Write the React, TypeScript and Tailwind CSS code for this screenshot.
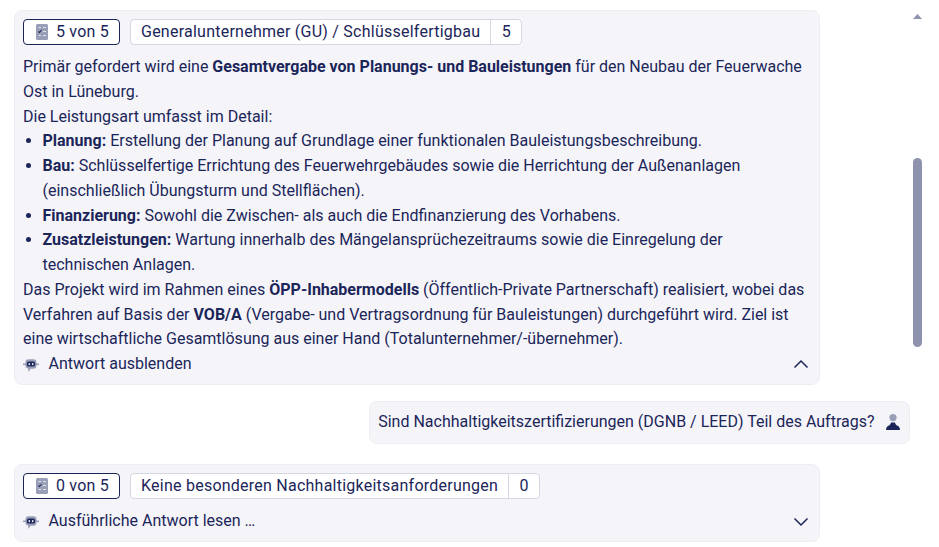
import React from "react";

const navy = "#1b2559";

function ChecklistIcon() {
  return (
    <svg width="12" height="16" viewBox="0 0 12 16" className="shrink-0">
      <rect x="0" y="0" width="12" height="16" rx="1.5" fill="#9a9fb8" />
      <path d="M2.5 7.5l1 1 2-2.5" stroke="#1b2559" strokeWidth="1.1" fill="none" />
      <path d="M7 3.5h3M7 7.5h3M7 11.5h3M2.5 11.5h2.5M2.5 3.5h2.5" stroke="#dfe1ea" strokeWidth="1" fill="none" />
    </svg>
  );
}

function BotIcon() {
  return (
    <svg width="16" height="14" viewBox="0 0 16 14" className="mt-[3px] shrink-0">
      <rect x="0" y="4.5" width="3" height="1.6" fill="#9a9fb8" />
      <rect x="13" y="4.5" width="3" height="1.6" fill="#9a9fb8" />
      <path d="M5.5 0.3h5a3 3 0 0 1 3 3v3.4a3 3 0 0 1-3 3H7.8L5.2 13V9.6a3 3 0 0 1-2.7-2.9V3.3a3 3 0 0 1 3-3z" fill="#9a9fb8" />
      <rect x="3.8" y="2.6" width="8.4" height="5" rx="2.2" fill="#1b2559" />
      <rect x="5.5" y="4" width="1.6" height="2.2" rx="0.7" fill="#e4e6f0" />
      <rect x="8.9" y="4" width="1.6" height="2.2" rx="0.7" fill="#e4e6f0" />
    </svg>
  );
}

function UserIcon() {
  return (
    <svg width="14" height="16" viewBox="0 0 14 16" className="shrink-0">
      <circle cx="7" cy="3.6" r="3.6" fill="#9a9fb8" />
      <path d="M0 16c0-2.6 1.4-4 3-4.6C4.2 11 4.6 10 5 8.6h4c.4 1.4.8 2.4 2 2.8 1.6.6 3 2 3 4.6z" fill="#1b2559" />
    </svg>
  );
}

function Chevron({ up }: { up?: boolean }) {
  return (
    <svg width="16" height="10" viewBox="0 0 16 10" className="shrink-0">
      <path d={up ? "M1.5 8.5L8 2l6.5 6.5" : "M1.5 1.5L8 8l6.5-6.5"} stroke="#1b2559" strokeWidth="1.5" fill="none" />
    </svg>
  );
}

function Tags({ score, label, count }: { score: string; label: string; count: string }) {
  return (
    <div className="flex h-[26px] items-stretch gap-[10px] tracking-[0.24px]">
      <div className="flex w-[97px] items-center justify-center gap-[8px] rounded-[4px] border border-[#1b2559] bg-white pl-[2px]">
        <ChecklistIcon />
        <span>{score}</span>
      </div>
      <div className="flex items-stretch rounded-[4px] border border-[#d5d7e2] bg-white">
        <span className="flex items-center px-[10px]">{label}</span>
        <span className="flex w-[31px] items-center justify-center border-l border-[#d5d7e2]">{count}</span>
      </div>
    </div>
  );
}

export default function App() {
  return (
    <div
      className="flex h-[547px] w-[939px] overflow-hidden bg-white text-[16px] leading-[24.75px]"
      style={{ fontFamily: "Roboto, sans-serif", color: navy }}
    >
      <main className="flex w-[910px] shrink-0 flex-col pl-[14px] pt-[10px]">
        <section className="w-[806px] rounded-[8px] border border-[#eceef3] bg-[#f5f5f9] pb-[7px] pl-[8px] pr-[10px] pt-[8px]">
          <Tags score="5 von 5" label="Generalunternehmer (GU) / Schlüsselfertigbau" count="5" />
          <div className="mt-[10px]">
            <p>
              Primär gefordert wird eine <b className="font-bold">Gesamtvergabe von Planungs- und Bauleistungen</b> für den Neubau der Feuerwache Ost in Lüneburg.
            </p>
            <p>Die Leistungsart umfasst im Detail:</p>
            <ul className="list-disc pl-[19.5px]">
              <li><b className="font-bold">Planung:</b> Erstellung der Planung auf Grundlage einer funktionalen Bauleistungsbeschreibung.</li>
              <li><b className="font-bold">Bau:</b> Schlüsselfertige Errichtung des Feuerwehrgebäudes sowie die Herrichtung der Außenanlagen (einschließlich Übungsturm und Stellflächen).</li>
              <li><b className="font-bold">Finanzierung:</b> Sowohl die Zwischen- als auch die Endfinanzierung des Vorhabens.</li>
              <li><b className="font-bold">Zusatzleistungen:</b> Wartung innerhalb des Mängelansprüchezeitraums sowie die Einregelung der technischen Anlagen.</li>
            </ul>
            <p>
              Das Projekt wird im Rahmen eines <b className="font-bold">ÖPP-Inhabermodells</b> (Öffentlich-Private Partnerschaft) realisiert, wobei das Verfahren auf Basis der <b className="font-bold">VOB/A</b> (Vergabe- und Vertragsordnung für Bauleistungen) durchgeführt wird. Ziel ist eine wirtschaftliche Gesamtlösung aus einer Hand (Totalunternehmer/-übernehmer).
            </p>
          </div>
          <div className="flex items-center justify-between">
            <div className="flex items-center gap-[9.5px]">
              <BotIcon />
              <span>Antwort ausblenden</span>
            </div>
            <Chevron up />
          </div>
        </section>

        <div className="mt-[16px] flex justify-end">
          <div className="flex h-[43px] items-center gap-[11.5px] rounded-[8px] border border-[#eceef3] bg-[#f5f5f9] pl-[8px] pr-[9px]">
            <span>Sind Nachhaltigkeitszertifizierungen (DGNB / LEED) Teil des Auftrags?</span>
            <UserIcon />
          </div>
        </div>

        <section className="mt-[20px] w-[806px] rounded-[8px] border border-[#eceef3] bg-[#f5f5f9] pb-[7px] pl-[8px] pr-[10px] pt-[8.4px]">
          <Tags score="0 von 5" label="Keine besonderen Nachhaltigkeitsanforderungen" count="0" />
          <div className="mt-[10px] flex items-center justify-between">
            <div className="flex items-center gap-[9.5px]">
              <BotIcon />
              <span>Ausführliche Antwort lesen …</span>
            </div>
            <Chevron />
          </div>
        </section>
      </main>

      <aside className="flex w-[29px] flex-col pl-[3px]">
        <svg width="9" height="5" viewBox="0 0 9 5" className="mt-[14px]">
          <path d="M4.5 0L9 5H0z" fill="#8d93ad" />
        </svg>
        <div className="mt-[139px] h-[189px] w-[9px] rounded-full bg-[#8d93ad]" />
      </aside>
    </div>
  );
}
